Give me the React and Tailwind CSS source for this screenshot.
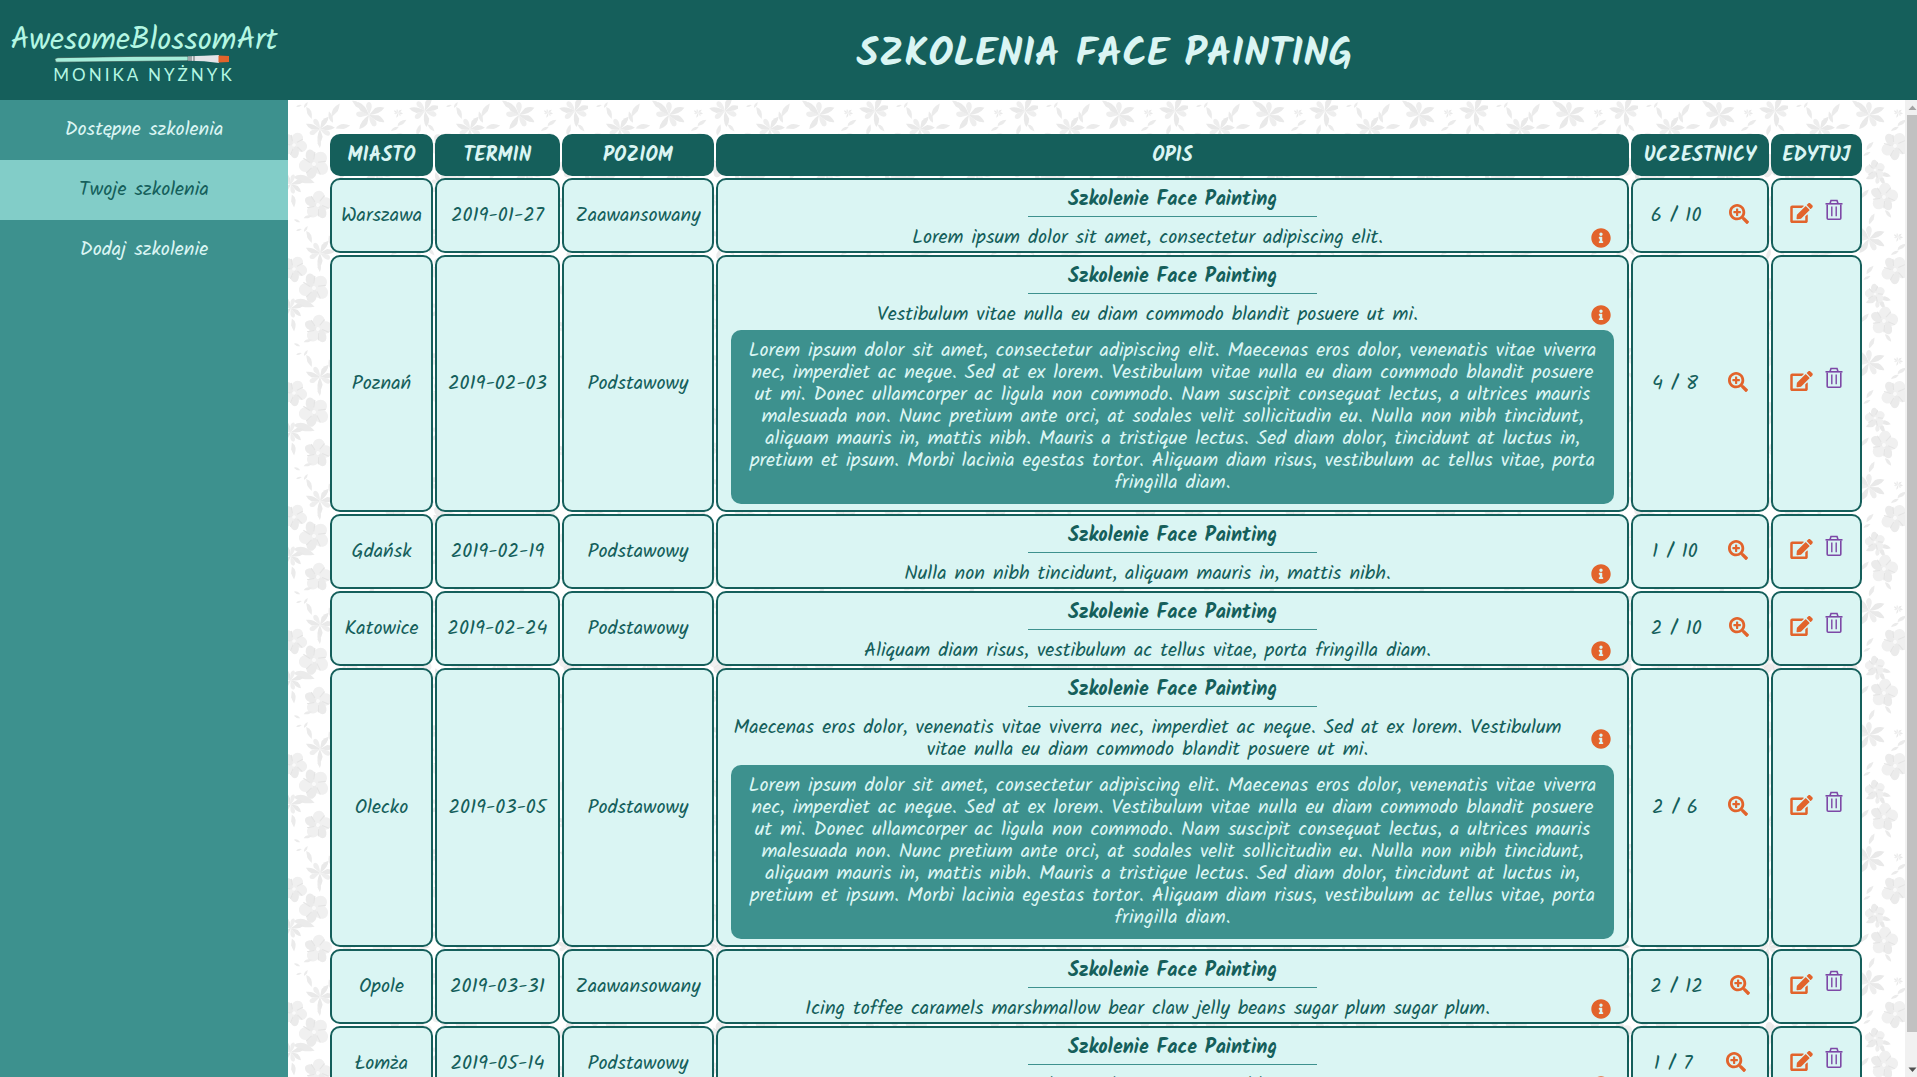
import React from "react";
import { FaEdit, FaInfoCircle, FaSearchPlus } from "react-icons/fa";

const LONG_TEXT =
  "Lorem ipsum dolor sit amet, consectetur adipiscing elit. Maecenas eros dolor, venenatis vitae viverra nec, imperdiet ac neque. Sed at ex lorem. Vestibulum vitae nulla eu diam commodo blandit posuere ut mi. Donec ullamcorper ac ligula non commodo. Nam suscipit consequat lectus, a ultrices mauris malesuada non. Nunc pretium ante orci, at sodales velit sollicitudin eu. Nulla non nibh tincidunt, aliquam mauris in, mattis nibh. Mauris a tristique lectus. Sed diam dolor, tincidunt at luctus in, pretium et ipsum. Morbi lacinia egestas tortor. Aliquam diam risus, vestibulum ac tellus vitae, porta fringilla diam.";

const TRAININGS = [
  { city: "Warszawa", date: "2019-01-27", level: "Zaawansowany", text: "Lorem ipsum dolor sit amet, consectetur adipiscing elit.", count: "6 / 10" },
  { city: "Poznań", date: "2019-02-03", level: "Podstawowy", text: "Vestibulum vitae nulla eu diam commodo blandit posuere ut mi.", count: "4 / 8", open: true },
  { city: "Gdańsk", date: "2019-02-19", level: "Podstawowy", text: "Nulla non nibh tincidunt, aliquam mauris in, mattis nibh.", count: "1 / 10" },
  { city: "Katowice", date: "2019-02-24", level: "Podstawowy", text: "Aliquam diam risus, vestibulum ac tellus vitae, porta fringilla diam.", count: "2 / 10" },
  { city: "Olecko", date: "2019-03-05", level: "Podstawowy", text: "Maecenas eros dolor, venenatis vitae viverra nec, imperdiet ac neque. Sed at ex lorem. Vestibulum vitae nulla eu diam commodo blandit posuere ut mi.", count: "2 / 6", open: true },
  { city: "Opole", date: "2019-03-31", level: "Zaawansowany", text: "Icing toffee caramels marshmallow bear claw jelly beans sugar plum sugar plum.", count: "2 / 12" },
  { city: "Łomża", date: "2019-05-14", level: "Podstawowy", text: "Sed at ex lorem, mattis nibh.", count: "1 / 7" },
];

const NAV = [
  { label: "Dostępne szkolenia" },
  { label: "Twoje szkolenia", active: true },
  { label: "Dodaj szkolenie" },
];

function Bloom({ x, y, r, turn = 0 }) {
  return (
    <g transform={`translate(${x} ${y}) rotate(${turn})`}>
      {[0, 76, 140, 219, 288].map((a, i) => (
        <ellipse
          key={a}
          cx={r * 0.54}
          cy="0"
          rx={r * 0.48}
          ry={r * (i % 2 ? 0.34 : 0.44)}
          transform={`rotate(${a})`}
          fill={i % 2 ? "#ebebeb" : "#f0f0f0"}
        />
      ))}
      {[20, 92, 170, 236, 308].map((a) => (
        <path key={a} d={`M${r * 0.3} 0L${r * 0.8} ${r * 0.12}`} transform={`rotate(${a})`} stroke="#e4e4e4" strokeWidth="1" />
      ))}
      <circle r={r * 0.14} fill="#fafafa" />
    </g>
  );
}

function Star({ x, y, r, turn = 0 }) {
  return (
    <g transform={`translate(${x} ${y}) rotate(${turn})`}>
      {[0, 40, 100, 165, 205, 250, 310].map((a, i) => (
        <path
          key={a}
          d={`M0 0Q${r * 0.3} ${-r * 0.14} ${r * 0.5} ${-r * 0.22}Q${r * 0.8} ${-r * 0.2} ${i % 2 ? r * 0.75 : r} 0Q${r * 0.6} ${r * 0.24} 0 0`}
          transform={`rotate(${a})`}
          fill={i % 2 ? "#eeeeee" : "#e9e9e9"}
        />
      ))}
    </g>
  );
}

function Leaf({ x, y, l, turn = 0 }) {
  return (
    <path
      d={`M${-l / 2} 0Q${-l / 8} ${-l / 2.4} ${l / 2} 0Q${l / 5} ${l / 8} 0 ${l / 7}Q${-l / 4} ${l / 12} ${-l / 2} 0`}
      transform={`translate(${x} ${y}) rotate(${turn})`}
      fill="#ebebeb"
    />
  );
}

function FloralBackground() {
  return (
    <svg className="pointer-events-none absolute inset-0 h-full w-full" aria-hidden="true">
      <defs>
        <pattern id="floral" width="150" height="124" patternUnits="userSpaceOnUse">
          <Leaf x={11} y={6} l={6} turn={-20} />
          <Leaf x={18} y={5} l={7} turn={-60} />
          <Leaf x={21} y={13} l={13} turn={65} />
          <Leaf x={48} y={10} l={15} turn={-60} />
          <Leaf x={43} y={17} l={12} turn={-110} />
          <Star x={32} y={29} r={15} turn={-5} />
          <Leaf x={55} y={27} l={15} turn={-12} />
          <Bloom x={6} y={45} r={13} turn={10} />
          <Bloom x={156} y={45} r={13} turn={10} />
          <Leaf x={31} y={43} l={10} turn={80} />
          <Bloom x={26} y={64} r={15} turn={30} />
          <Leaf x={16} y={80} l={22} turn={15} />
          <Star x={3} y={84} r={13} turn={40} />
          <Star x={153} y={84} r={13} turn={40} />
          <Leaf x={5} y={101} l={13} turn={80} />
          <Bloom x={30} y={105} r={14} turn={-12} />
          <Leaf x={20} y={117} l={9} turn={-15} />
          <Leaf x={9} y={121} l={7} turn={20} />
          <Star x={81} y={15} r={17} turn={25} />
          <Leaf x={69} y={5} l={13} turn={40} />
          <Star x={110} y={13} r={5} turn={10} />
          <Leaf x={114} y={23} l={11} turn={-35} />
          <Leaf x={107} y={29} l={9} turn={-30} />
          <Star x={137} y={11} r={16} turn={-15} />
          <Leaf x={131} y={30} l={12} turn={-75} />
          <Leaf x={143} y={28} l={10} turn={45} />
          <Bloom x={107} y={46} r={14} turn={15} />
          <Leaf x={82} y={46} l={11} turn={-50} />
          <Leaf x={79} y={54} l={8} turn={-30} />
          <Star x={90} y={74} r={13} turn={60} />
          <Bloom x={87} y={70} r={10} turn={45} />
          <Bloom x={96} y={97} r={14} turn={-10} />
          <Leaf x={77} y={94} l={12} turn={-50} />
          <Leaf x={100} y={114} l={10} turn={50} />
          <Leaf x={84} y={119} l={12} turn={-65} />
          <Star x={58} y={68} r={13} turn={20} />
          <Bloom x={60} y={96} r={12} turn={20} />
          <Bloom x={133} y={66} r={12} turn={40} />
          <Star x={130} y={103} r={12} turn={0} />
        </pattern>
      </defs>
      <rect width="100%" height="100%" fill="url(#floral)" />
    </svg>
  );
}

function TrashIcon() {
  return (
    <svg width="18" height="22" viewBox="0 0 18 22" fill="none" stroke="currentColor" strokeWidth="1.6" aria-hidden="true">
      <path d="M0.5 4.8H17.5" />
      <path d="M5 4.5L6 1.5H12L13 4.5" />
      <path d="M2.2 5.5V19.2Q2.2 20.2 3.2 20.2H14.8Q15.8 20.2 15.8 19.2V5.5" />
      <path d="M6.8 7.5V17.2M11.2 7.5V17.2" strokeWidth="1.4" />
    </svg>
  );
}

function Logo() {
  return (
    <a href="#home" className="flex w-72 shrink-0 flex-col items-center pt-2 text-[#b4f7e3]">
      <span className="text-[31px] leading-9">AwesomeBlossomArt</span>
      <svg width="176" height="8" viewBox="0 0 176 8" className="-mt-1 mr-1" aria-hidden="true">
        <path d="M1 4.5Q1 3 4 2.7L80 1.4L134 1.2V5.8L3 7.2Q1 7.2 1 4.5Z" fill="#a5eeda" stroke="#2c4542" strokeWidth="0.6" />
        <path d="M134 1.2L150 0.8L165 0V8L150 6.2L134 5.8Z" fill="#e4e4e8" />
        <path d="M135 1V6M137 1V6M140 1V6" stroke="#3c4a4a" strokeWidth="0.8" />
        <path d="M164.500 0.500L175 1V7L164.500 7.500Z" fill="#e2632b" />
      </svg>
      <span className="mt-[2px] font-[Lato,sans-serif] text-[17px] leading-5 tracking-[3px]">MONIKA NYŻNYK</span>
    </a>
  );
}

function Th({ children, className }) {
  return (
    <th scope="col" className={`h-[42px] rounded-[10px] bg-[#155f5b] p-0 pt-[2px] align-middle font-bold text-[#daf5f3] ${className}`}>
      {children}
    </th>
  );
}

function Td({ children, className = "" }) {
  return (
    <td className={`rounded-[10px] border-2 border-[#155f5b] bg-[#daf5f3] p-0 align-middle ${className}`}>{children}</td>
  );
}

function TrainingRow({ training }) {
  return (
    <tr>
      <Td>{training.city}</Td>
      <Td>{training.date}</Td>
      <Td>{training.level}</Td>
      <Td className="align-top">
        <div className="px-[13px] pt-[9px] pb-[2px]">
          <h2 className="font-bold">Szkolenie Face Painting</h2>
          <hr className="mx-auto mt-[5px] mb-[10px] w-[289px] border-[#3d918e]" />
          <div className="flex items-center">
            <p className="flex-1">{training.text}</p>
            <button type="button" aria-label="Szczegóły" className="mr-[3px] ml-[27px] text-[#e2632b]">
              <FaInfoCircle size={20} />
            </button>
          </div>
          {training.open && (
            <p className="mt-1 mb-1 rounded-[10px] bg-[#3d918e] p-[10px] text-[#daf5f3]">{LONG_TEXT}</p>
          )}
        </div>
      </Td>
      <Td>
        <div className="flex items-center justify-around px-1">
          <span>{training.count}</span>
          <button type="button" aria-label="Pokaż uczestników" className="pb-1 text-[#e2632b]">
            <FaSearchPlus size={20} />
          </button>
        </div>
      </Td>
      <Td>
        <div className="flex items-start justify-center gap-3 pb-[9px]">
          <button type="button" aria-label="Edytuj" className="pt-1 text-[#e2632b]">
            <FaEdit className="h-5 w-[23px]" />
          </button>
          <button type="button" aria-label="Usuń" className="text-[#7d48a6]">
            <TrashIcon />
          </button>
        </div>
      </Td>
    </tr>
  );
}

function ScrollTrack() {
  return (
    <div className="flex w-3 shrink-0 flex-col bg-[#f1f1f1]" aria-hidden="true">
      <svg width="12" height="15" viewBox="0 0 12 15"><path d="M3.500 10L7.500 5.500L11.500 10Z" fill="#a3a3a3" /></svg>
      <div className="ml-[2px] flex-1 bg-[#c1c1c1]" />
      <div className="h-[30px]" />
      <svg width="12" height="15" viewBox="0 0 12 15"><path d="M3.500 5.500L7.500 10L11.500 5.500Z" fill="#505050" /></svg>
    </div>
  );
}

export default function App() {
  return (
    <div className="flex h-screen flex-col bg-white font-[Kalam,cursive] text-[20px] leading-[22px] text-[#155f5b]">
      <header className="flex h-[100px] shrink-0 items-center bg-[#155f5b]">
        <Logo />
        <h1 className="flex-1 pt-[10px] pl-1 text-center text-[40px] leading-[44px] font-bold text-[#daf5f3]">SZKOLENIA FACE PAINTING</h1>
      </header>
      <div className="flex min-h-0 flex-1">
        <nav className="w-72 shrink-0 bg-[#3d918e]">
          {NAV.map((item) => (
            <a
              key={item.label}
              href="#szkolenia"
              className={`flex h-[60px] items-center justify-center ${item.active ? "bg-[#82cdc8] text-[#155f5b]" : "text-[#daf5f3]"}`}
            >
              {item.label}
            </a>
          ))}
        </nav>
        <main className="relative min-w-0 flex-1">
          <FloralBackground />
          <div className="relative h-full overflow-y-auto pt-8 pr-[41px] pl-10 [scrollbar-width:none]">
            <table className="w-full border-separate border-spacing-[2px] text-center">
              <thead>
                <tr>
                  <Th className="w-[103px]">MIASTO</Th>
                  <Th className="w-[125px]">TERMIN</Th>
                  <Th className="w-[152px]">POZIOM</Th>
                  <Th className="">OPIS</Th>
                  <Th className="w-[138px]">UCZESTNICY</Th>
                  <Th className="w-[91px]">EDYTUJ</Th>
                </tr>
              </thead>
              <tbody>
                {TRAININGS.map((training) => (
                  <TrainingRow key={training.city} training={training} />
                ))}
              </tbody>
            </table>
          </div>
        </main>
        <ScrollTrack />
      </div>
    </div>
  );
}
